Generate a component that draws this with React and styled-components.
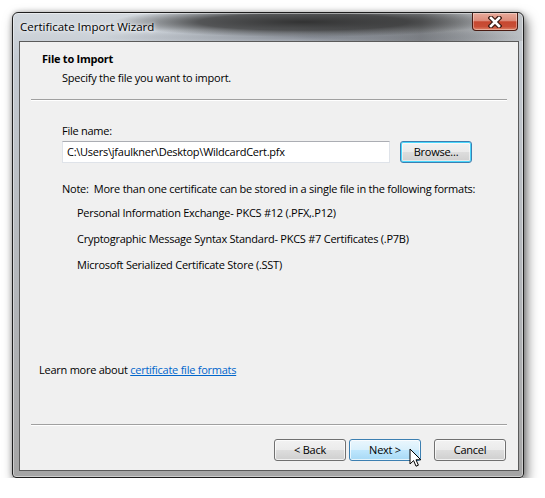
import React from "react";
import styled, { createGlobalStyle } from "styled-components";

const Global = createGlobalStyle`
  html, body { margin: 0; padding: 0; background: #ffffff; }
  body { font-family: "Open Sans", "Noto Sans", sans-serif; font-size: 11px; letter-spacing: -0.25px; color: #000; }
  * { box-sizing: border-box; }
`;

const Window = styled.div`
  margin: 12px 0 0 12px;
  width: 512px;
  height: 466px;
  border: 1px solid #1e1e1e;
  border-radius: 6px 6px 4px 4px;
  padding: 0 4px 6px 6px;
  display: flex;
  flex-direction: column;
  background:
    radial-gradient(ellipse 190px 15px at 290px 9px, rgba(42,42,42,0.95), rgba(42,42,42,0.75) 55%, rgba(42,42,42,0) 100%),
    radial-gradient(ellipse 210px 9px at 300px 24px, rgba(105,110,120,0.7), rgba(105,110,120,0) 100%),
    linear-gradient(90deg, rgba(0,0,0,0) 55%, rgba(70,70,70,0.55) 80%, rgba(150,150,150,0.3) 100%) 0 0 / 100% 28px no-repeat,
    linear-gradient(180deg, #d3d9df 0%, #c4cad1 10%, #b3b6ba 60%, #a5a5a5 100%);
  box-shadow: 3px 5px 12px rgba(0,0,0,0.55), 0 0 5px rgba(0,0,0,0.25), inset 0 0 0 1px rgba(255,255,255,0.45);
`;

const TitleBar = styled.div`
  height: 28px;
  display: flex;
  align-items: flex-start;
  justify-content: space-between;
  flex: none;
`;

const Title = styled.div`
  margin: 6px 0 0 1px;
  line-height: 16px;
  font-size: 11.5px;
  letter-spacing: 0;
  color: #000;
  text-shadow: 0 0 6px rgba(255,255,255,0.9), 0 0 3px rgba(255,255,255,0.9);
`;

const CloseButton = styled.div`
  width: 46px;
  height: 18px;
  margin-right: 1px;
  border: 1px solid #4a1b12;
  border-top: none;
  border-radius: 0 0 4px 4px;
  background: linear-gradient(180deg, #e8ab9c 0%, #dc8c7b 45%, #c6472f 52%, #c84f37 80%, #e0866a 100%);
  box-shadow: inset 0 0 0 1px rgba(255,255,255,0.35);
  display: flex;
  align-items: center;
  justify-content: center;
`;

const Client = styled.div`
  flex: 1;
  display: flex;
  flex-direction: column;
  background: #f0f0f0;
  border: 1px solid #5a5a5a;
`;

const Header = styled.div`
  padding: 9px 0 13px 22px;
  display: flex;
  flex-direction: column;
  gap: 3px;
`;

const HeaderTitle = styled.div`
  font-weight: 700;
  line-height: 16px;
`;

const HeaderSub = styled.div`
  margin-left: 20px;
  line-height: 16px;
`;

const Separator = styled.div`
  margin: 0 11px;
  border-top: 1px solid #a0a0a0;
  border-bottom: 1px solid #ffffff;
  flex: none;
`;

const Body = styled.div`
  flex: 1;
  display: flex;
  flex-direction: column;
  padding: 22px 0 46px 42px;
`;

const Label = styled.div`
  line-height: 16px;
  margin-bottom: 2px;
`;

const InputRow = styled.div`
  display: flex;
  align-items: center;
  gap: 10px;
`;

const TextBox = styled.div`
  width: 328px;
  height: 22px;
  background: #fff;
  border: 1px solid #dfe3e9;
  border-top-color: #abadb3;
  padding: 0 4px;
  display: flex;
  align-items: center;
  line-height: 16px;
`;

const Button = styled.div`
  position: relative;
  width: 72px;
  height: 22px;
  margin-left: ${p => (p.$spaced ? "10px" : "0")};
  border-radius: 3px;
  border: 1px solid ${p => (p.$hover || p.$focus ? "#3c7fb1" : "#707070")};
  background: ${p =>
    p.$hover
      ? "linear-gradient(180deg, #eaf6fd 0%, #d9f0fc 48%, #bee6fd 52%, #a7d9f5 100%)"
      : "linear-gradient(180deg, #f2f2f2 0%, #ebebeb 48%, #dddddd 52%, #cfcfcf 100%)"};
  box-shadow: ${p =>
    p.$focus
      ? "inset 0 0 0 1px #4ad7fc, inset 0 0 0 2px rgba(255,255,255,0.5)"
      : "inset 0 0 0 1px rgba(255,255,255,0.7)"};
  display: flex;
  align-items: center;
  justify-content: center;
  line-height: 16px;
  flex: none;
`;

const Note = styled.div`
  margin-top: 18px;
  line-height: 16px;
`;

const FormatList = styled.div`
  margin-top: 8px;
  padding-left: 15px;
  display: flex;
  flex-direction: column;
  gap: 10px;
`;

const FormatItem = styled.div`
  line-height: 16px;
`;

const LearnMore = styled.div`
  margin-top: auto;
  margin-left: -23px;
  line-height: 16px;
`;

const Link = styled.a`
  color: #0066cc;
  text-decoration: underline;
`;

const Footer = styled.div`
  display: flex;
  justify-content: flex-end;
  gap: 3px;
  padding: 13px 12px 9px 0;
  flex: none;
`;

const Cursor = styled.svg`
  position: absolute;
  left: 59px;
  top: 8px;
  pointer-events: none;
`;

export default function App() {
  return (
    <>
      <Global />
      <Window>
        <TitleBar>
          <Title>Certificate Import Wizard</Title>
          <CloseButton>
            <svg width="14" height="12" viewBox="0 0 14 12">
              <path d="M3 2 L11 10 M11 2 L3 10" stroke="#3b1a12" strokeWidth="5" strokeLinecap="square" />
              <path d="M3 2 L11 10 M11 2 L3 10" stroke="#ffffff" strokeWidth="2.6" strokeLinecap="square" />
            </svg>
          </CloseButton>
        </TitleBar>
        <Client>
          <Header>
            <HeaderTitle>File to Import</HeaderTitle>
            <HeaderSub>Specify the file you want to import.</HeaderSub>
          </Header>
          <Separator />
          <Body>
            <Label>File name:</Label>
            <InputRow>
              <TextBox>{"C:\\Users\\jfaulkner\\Desktop\\WildcardCert.pfx"}</TextBox>
              <Button $focus>Browse...</Button>
            </InputRow>
            <Note>Note:&nbsp; More than one certificate can be stored in a single file in the following formats:</Note>
            <FormatList>
              <FormatItem>Personal Information Exchange- PKCS #12 (.PFX,.P12)</FormatItem>
              <FormatItem>Cryptographic Message Syntax Standard- PKCS #7 Certificates (.P7B)</FormatItem>
              <FormatItem>Microsoft Serialized Certificate Store (.SST)</FormatItem>
            </FormatList>
            <LearnMore>
              Learn more about <Link href="#">certificate file formats</Link>
            </LearnMore>
          </Body>
          <Separator />
          <Footer>
            <Button>&lt; Back</Button>
            <Button $hover>
              Next &gt;
              <Cursor width="13" height="20" viewBox="0 0 13 20">
                <path d="M1 1 L1 16 L4.6 12.6 L7 18.2 L9.4 17.2 L7 11.8 L11.8 11.8 Z" fill="#ffffff" stroke="#000000" strokeWidth="1" strokeLinejoin="miter" />
              </Cursor>
            </Button>
            <Button $spaced>Cancel</Button>
          </Footer>
        </Client>
      </Window>
    </>
  );
}
